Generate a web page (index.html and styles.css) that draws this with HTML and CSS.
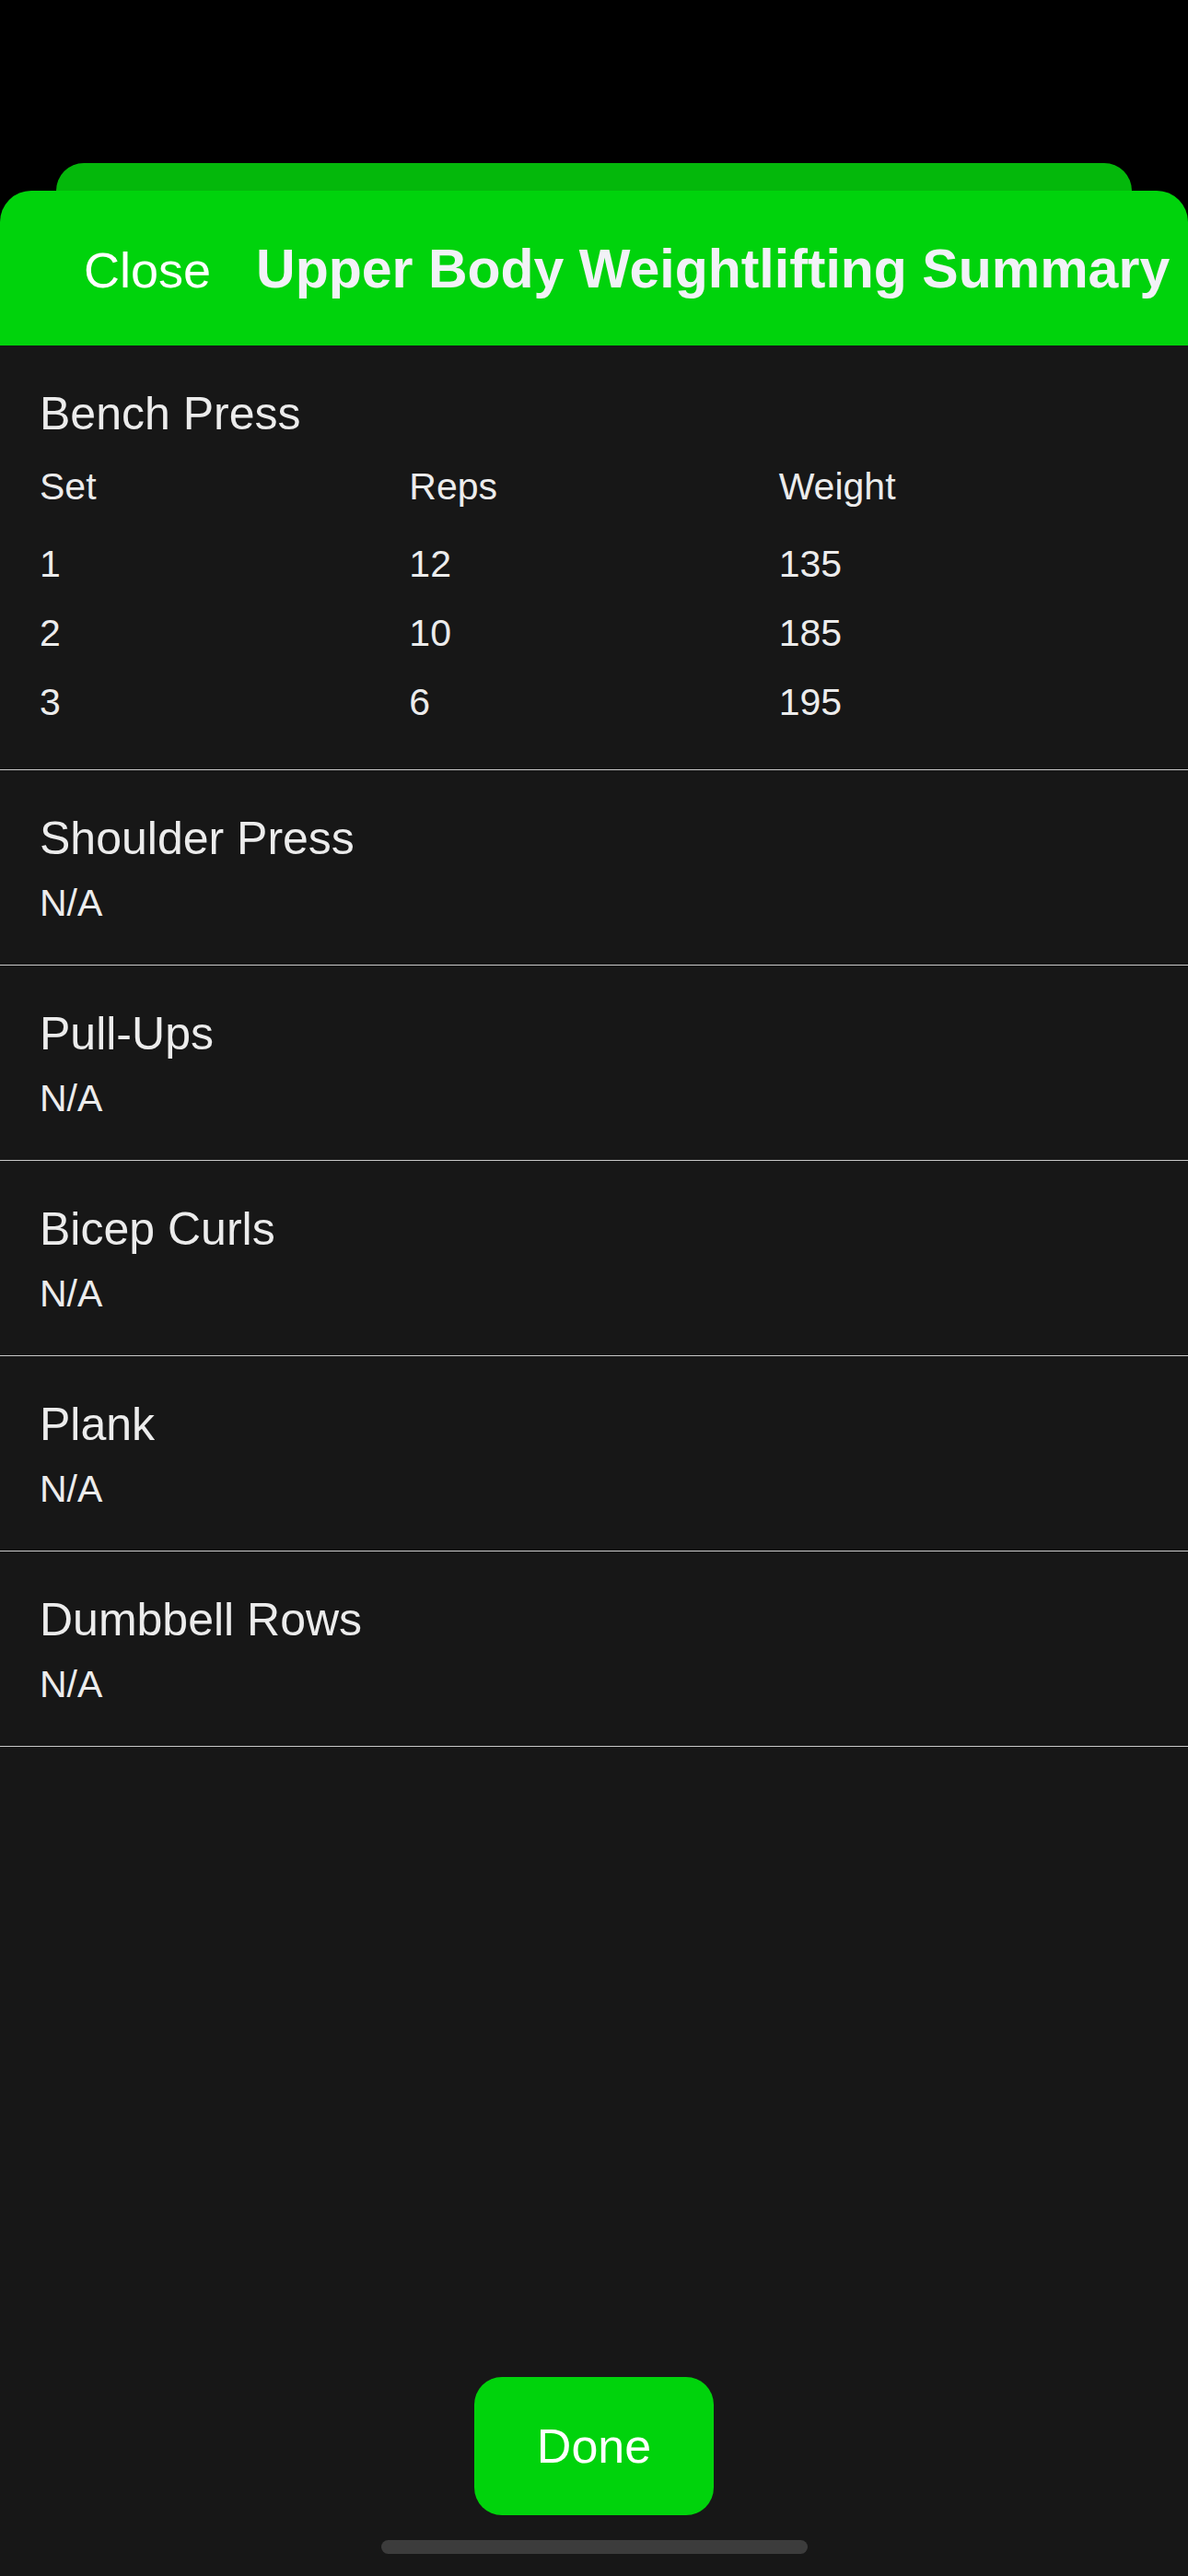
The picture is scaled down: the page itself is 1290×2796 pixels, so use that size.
FILE: index.html
```html
<!DOCTYPE html>
<html lang="en">
<head>
<meta charset="utf-8">
<title>Upper Body Weightlifting Summary</title>
<link rel="stylesheet" href="styles.css">
</head>
<body>
<div class="screen">
  <div class="sheet-back"></div>
  <div class="sheet">
    <header class="sheet-header">
      <span class="close">Close</span>
      <h1 class="title">Upper Body Weightlifting Summary</h1>
    </header>
    <main class="list">
      <section class="exercise">
        <h2 class="ex-name">Bench Press</h2>
        <div class="sets">
          <div class="sets-head">
            <span>Set</span><span>Reps</span><span>Weight</span>
          </div>
          <div class="set-row"><span>1</span><span>12</span><span>135</span></div>
          <div class="set-row"><span>2</span><span>10</span><span>185</span></div>
          <div class="set-row"><span>3</span><span>6</span><span>195</span></div>
        </div>
      </section>
      <section class="exercise simple">
        <h2 class="ex-name">Shoulder Press</h2>
        <p class="na">N/A</p>
      </section>
      <section class="exercise simple">
        <h2 class="ex-name">Pull-Ups</h2>
        <p class="na">N/A</p>
      </section>
      <section class="exercise simple">
        <h2 class="ex-name">Bicep Curls</h2>
        <p class="na">N/A</p>
      </section>
      <section class="exercise simple">
        <h2 class="ex-name">Plank</h2>
        <p class="na">N/A</p>
      </section>
      <section class="exercise simple">
        <h2 class="ex-name">Dumbbell Rows</h2>
        <p class="na">N/A</p>
      </section>
    </main>
    <footer class="footer">
      <button class="done">Done</button>
      <div class="home-indicator"></div>
    </footer>
  </div>
</div>
</body>
</html>
```

FILE: styles.css
```css
* {
  box-sizing: border-box;
}

html, body {
  margin: 0;
  padding: 0;
  background: #000;
}

body {
  font-family: "Liberation Sans", Arial, sans-serif;
  color: #ececec;
}

.screen {
  width: 1290px;
  height: 2796px;
  display: flex;
  flex-direction: column;
  padding-top: 177px;
  background: #000;
  overflow: hidden;
}

.sheet-back {
  height: 30px;
  margin: 0 61px 0 61px;
  background: #04b80b;
  border-radius: 32px 32px 0 0;
  flex: none;
}

.sheet {
  flex: 1;
  display: flex;
  flex-direction: column;
  background: #171717;
  border-radius: 34px 34px 0 0;
  overflow: hidden;
}

.sheet-header {
  height: 168px;
  flex: none;
  background: #00d30c;
  display: flex;
  align-items: baseline;
  gap: 49px;
  padding: 50px 0 0 91px;
  white-space: nowrap;
}

.close {
  font-size: 54px;
  line-height: 70px;
  color: #ffffff;
}

.title {
  margin: 0;
  font-size: 59px;
  line-height: 70px;
  font-weight: 700;
  color: #f2f2f7;
}

.list {
  flex: 1;
  display: flex;
  flex-direction: column;
}

.exercise {
  padding: 44px 43px 42px 43px;
  border-bottom: 1px solid #c8c8c8;
}

.exercise:first-child {
  padding-bottom: 35px;
}

.ex-name {
  margin: 0;
  font-size: 50px;
  line-height: 60px;
  font-weight: 400;
  color: #ececec;
}

.na {
  margin: 15px 0 0 0;
  font-size: 41px;
  line-height: 50px;
  color: #ececec;
}

.sets {
  margin-top: 24px;
}

.sets-head,
.set-row {
  display: grid;
  grid-template-columns: 1fr 1fr 1fr;
  font-size: 41px;
  color: #ececec;
}

.sets-head {
  line-height: 50px;
  margin-bottom: 22px;
}

.set-row {
  line-height: 75px;
}

.footer {
  flex: none;
  display: flex;
  flex-direction: column;
  align-items: center;
  padding-bottom: 24px;
}

.done {
  width: 260px;
  height: 150px;
  border: none;
  border-radius: 30px;
  background: #00d30c;
  color: #ffffff;
  font-family: "Liberation Sans", Arial, sans-serif;
  font-size: 52px;
  line-height: 1;
  padding: 0;
  display: flex;
  align-items: center;
  justify-content: center;
}

.home-indicator {
  margin-top: 27px;
  width: 463px;
  height: 15px;
  border-radius: 8px;
  background: #3c3c3c;
}
```
